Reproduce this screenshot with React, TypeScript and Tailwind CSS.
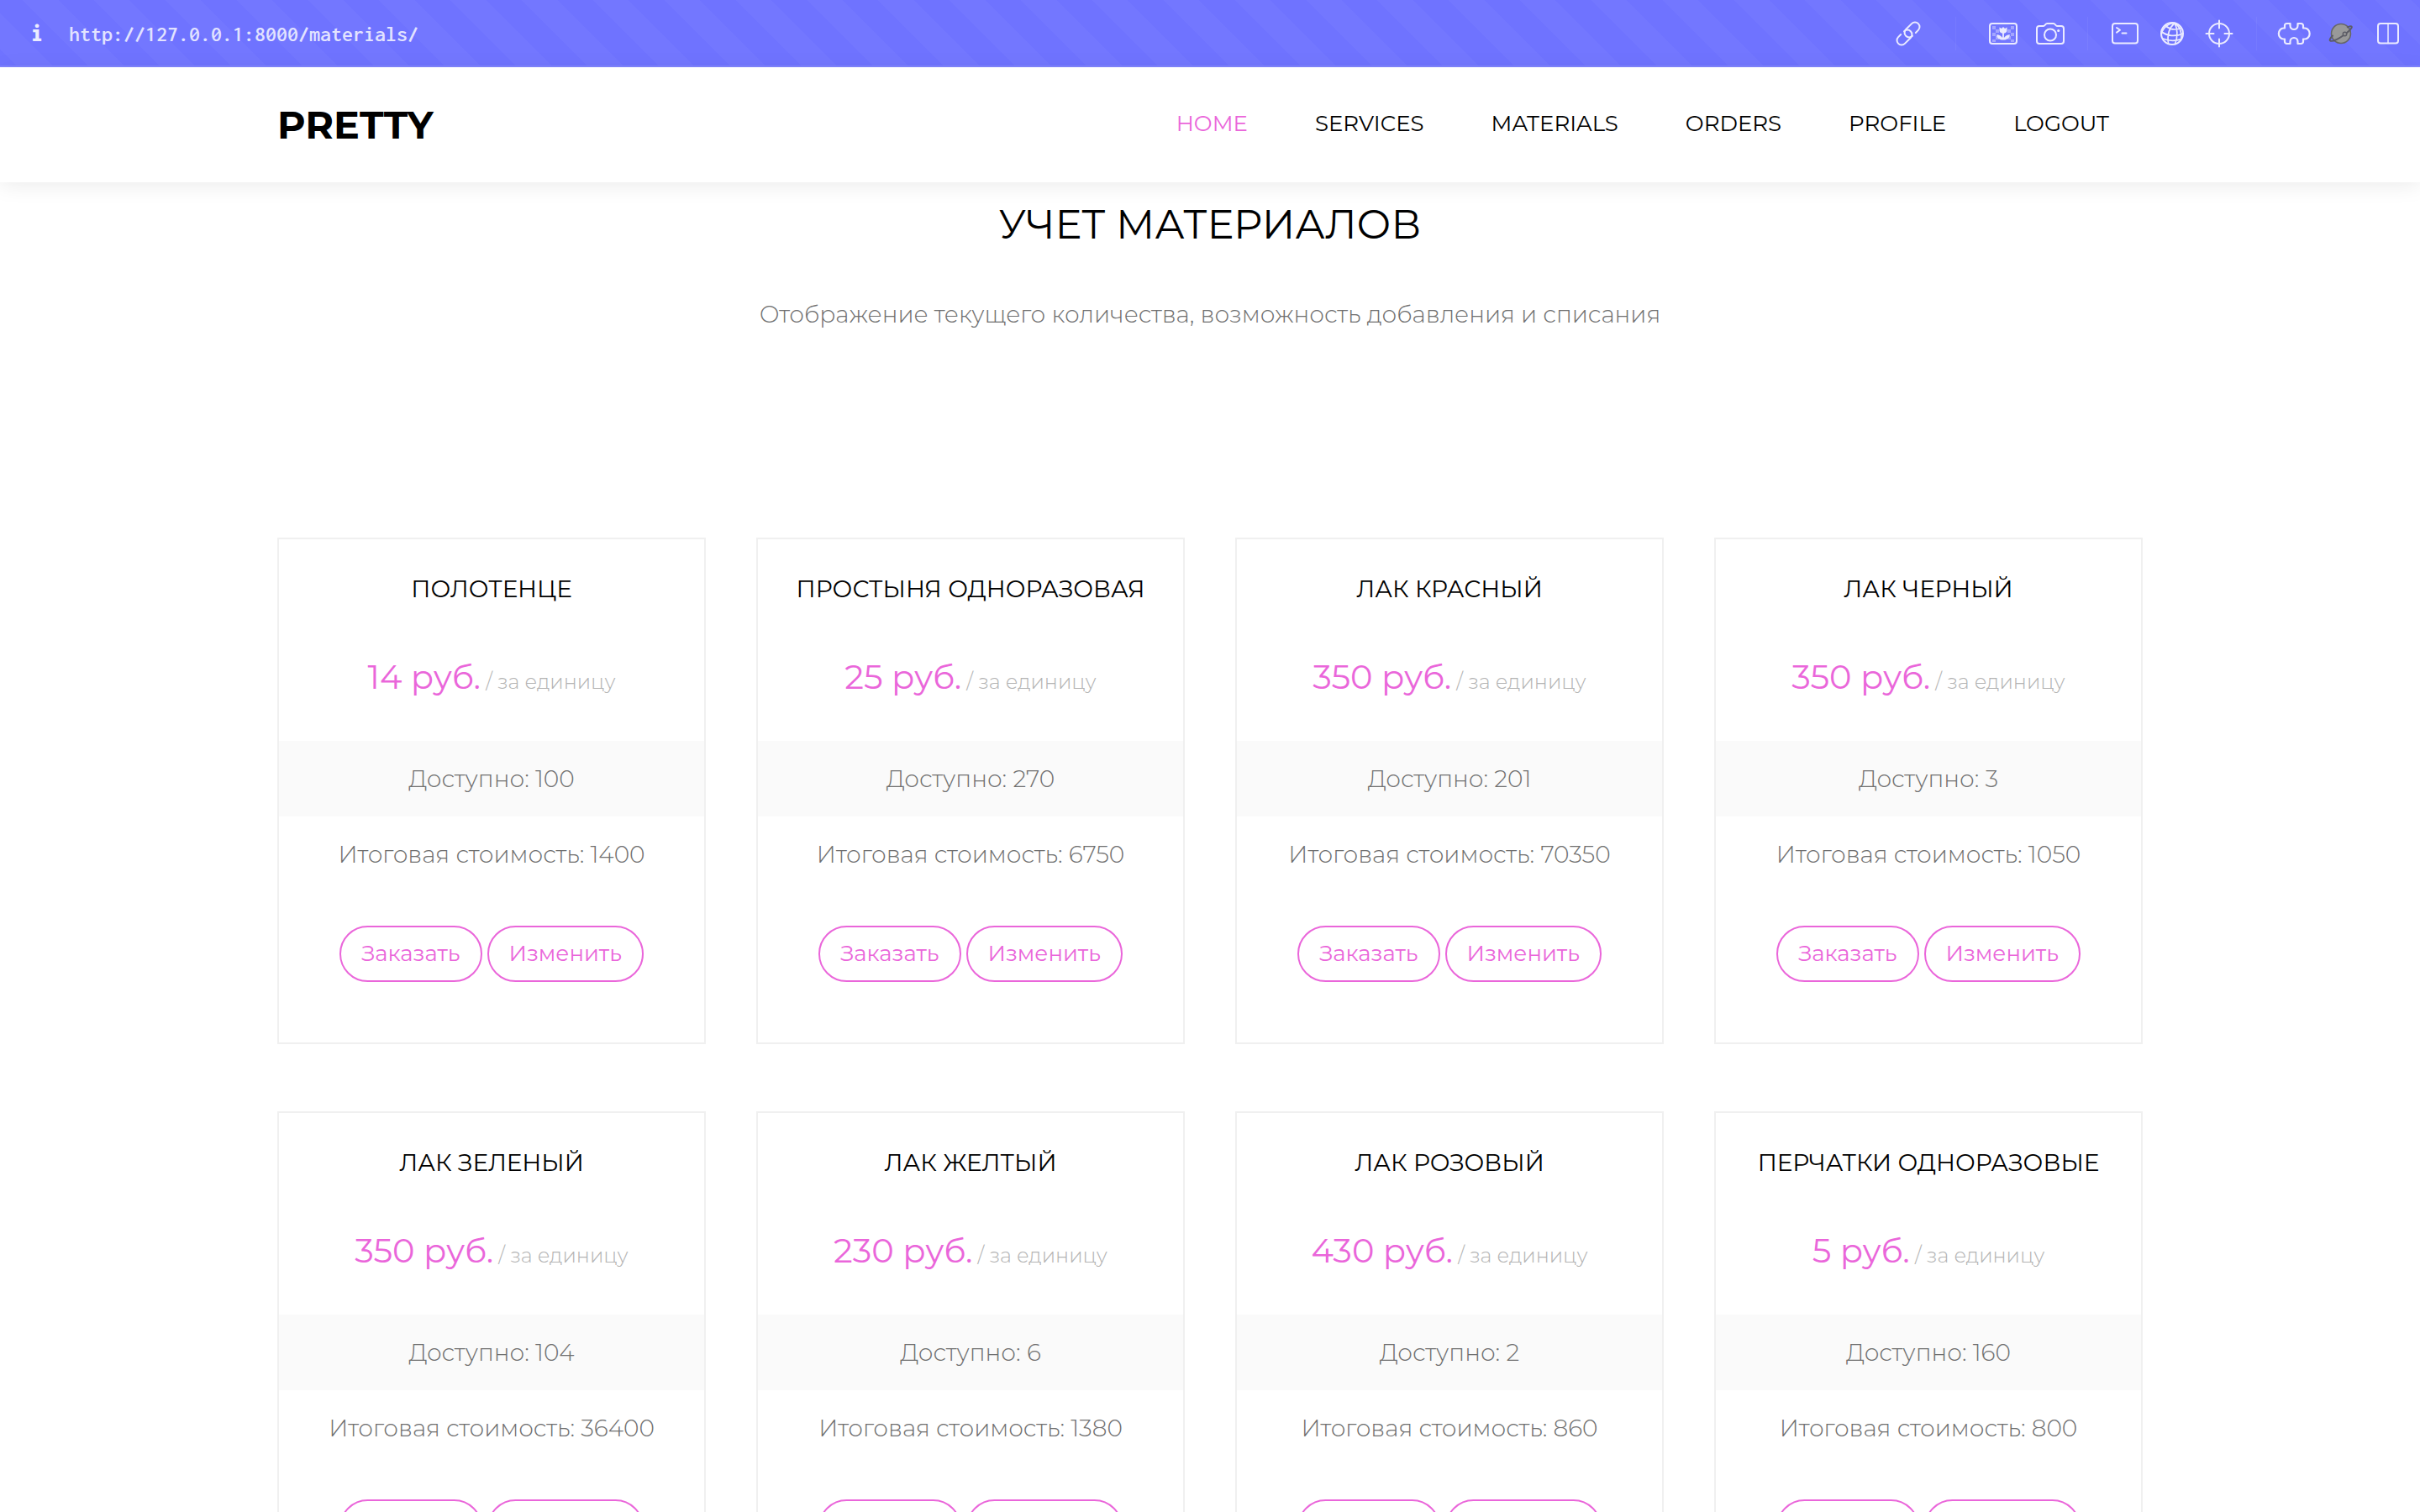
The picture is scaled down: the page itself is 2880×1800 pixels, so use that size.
import type { ReactNode } from "react";

type Material = { name: string; price: number; available: number; total: number };

const materials: Material[] = [
  { name: "Полотенце", price: 14, available: 100, total: 1400 },
  { name: "Простыня одноразовая", price: 25, available: 270, total: 6750 },
  { name: "Лак красный", price: 350, available: 201, total: 70350 },
  { name: "Лак черный", price: 350, available: 3, total: 1050 },
  { name: "Лак зеленый", price: 350, available: 104, total: 36400 },
  { name: "Лак желтый", price: 230, available: 6, total: 1380 },
  { name: "Лак розовый", price: 430, available: 2, total: 860 },
  { name: "Перчатки одноразовые", price: 5, available: 160, total: 800 },
];

const navItems = ["Home", "Services", "Materials", "Orders", "Profile", "Logout"];

function ToolButton({ label, children }: { label: string; children: ReactNode }) {
  return (
    <button type="button" aria-label={label} className="flex h-14 w-14 items-center justify-center">
      <svg
        viewBox="0 0 40 40"
        className="h-10 w-10"
        fill="none"
        stroke="currentColor"
        strokeWidth="2"
        strokeLinecap="round"
        strokeLinejoin="round"
        aria-hidden="true"
      >
        {children}
      </svg>
    </button>
  );
}

function Divider() {
  return <span className="mx-4 h-10 w-px bg-white/5" />;
}

function BrowserBar() {
  return (
    <div className="flex h-20 shrink-0 items-center border-b-2 border-[#8084ff] bg-[repeating-linear-gradient(45deg,#6f73ff_0px,#6f73ff_14px,#7377ff_14px,#7377ff_44px,#6f73ff_44px,#6f73ff_60px)] pt-0.5 pr-2.5 text-[#ebebff]">
      <span className="w-[82px] pl-[37px] font-['Inconsolata','DejaVu_Sans_Mono',monospace] text-[28px] font-black">i</span>
      <input
        aria-label="Address"
        readOnly
        value="http://127.0.0.1:8000/materials/"
        className="min-w-0 flex-1 bg-transparent font-['Inconsolata','DejaVu_Sans_Mono',monospace] text-[26px] font-semibold text-[#e2e3ff] outline-none"
      />
      <div className="flex items-center">
        <ToolButton label="Copy link">
          <g transform="rotate(-45 20 20)">
            <path d="M13 14.500H8.700a5.500 5.500 0 0 0 0 11h9.800a5.500 5.500 0 0 0 0-11" />
            <path d="M27 25.500h4.300a5.500 5.500 0 0 0 0-11h-9.800a5.500 5.500 0 0 0 0 11" />
          </g>
        </ToolButton>
        <span className="mx-7 h-10 w-px bg-white/5" />
        <ToolButton label="Page image">
          <rect x="4" y="8" width="32" height="24" rx="3" />
          <g fill="currentColor" stroke="none" opacity="0.4">
            <path d="M7 11h4v4H7zM11 15h4v4h-4zM7 19h4v4H7zM11 23h4v4h-4zM7 27h4v3H7zM29 11h4v4h-4zM25 15h4v4h-4zM29 19h4v4h-4zM25 23h4v4h-4zM29 27h4v3h-4z" />
          </g>
          <path
            fill="currentColor"
            stroke="none"
            d="M15.500 12.500l2.500 1.500 2-2 2 2 2.500-1.500v3.500c0 2-1.500 3.500-3.600 3.800V25c1.600-2.400 4-3.800 7-3.800-.3 4-3.300 6.300-7.900 6.300s-7.600-2.300-7.900-6.300c3 0 5.400 1.400 7 3.800v-5.200c-2.100-.3-3.600-1.800-3.600-3.800z"
          />
        </ToolButton>
        <ToolButton label="Screenshot">
          <path d="M7 11h5c1.500 0 2.300-3 4.200-3h7.600c1.900 0 2.700 3 4.200 3h5a3 3 0 0 1 3 3v15a3 3 0 0 1-3 3H7a3 3 0 0 1-3-3V14a3 3 0 0 1 3-3z" />
          <circle cx="20" cy="21.500" r="7" />
          <circle cx="29.700" cy="16.500" r="1.600" fill="currentColor" stroke="none" />
        </ToolButton>
        <Divider />
        <ToolButton label="Console">
          <rect x="5" y="8" width="30" height="23.500" rx="3" />
          <path d="M10 13l4 2.800-4 2.800M16.500 19.500h5" />
        </ToolButton>
        <ToolButton label="Network">
          <circle cx="20" cy="20" r="13" />
          <path
            strokeWidth="1.700"
            d="M23 7.500c-6 5-9 14-7.500 24.500M23 7.500c3.500 6 4 16 .5 25M23 7.500C15 8 9 13 7.500 20M23 7.500c5 3 8.500 9 8 18M12 10.500c5 4.500 12 5.500 18.500 3M7.500 17.500c6 5.500 16.500 6.500 25.500 2.500M9 26c6.500 2.500 15 3 22 .5"
          />
        </ToolButton>
        <ToolButton label="Inspect">
          <circle cx="20" cy="20" r="12" />
          <path d="M20 4.500V13.500M20 26.500v9M4.500 20H13.500M26.500 20h9" />
        </ToolButton>
        <Divider />
        <ToolButton label="Extensions">
          <path
            strokeWidth="2.200"
            d="M11.500 8h4v2.500a4.500 4.500 0 0 0 9 0V8h4a2.500 2.500 0 0 1 2.500 2.500V13.500h2a5.500 6.300 0 0 1 0 13h-2v3A2.500 2.500 0 0 1 28.500 32h-4v-2.500a4.500 4.500 0 0 0-9 0V32h-4A2.500 2.500 0 0 1 9 29.500v-3H7.500a5.500 6.300 0 0 1 0-13H9v-3A2.500 2.500 0 0 1 11.500 8z"
          />
        </ToolButton>
        <ToolButton label="Planet extension">
          <circle cx="20" cy="20" r="11.500" fill="#999999" stroke="#666666" strokeWidth="1.500" />
          <path
            stroke="#5c5c66"
            strokeWidth="2"
            d="M10 22.500c-3 3-4 5.300-2.800 6 2.500 1.300 9-1.800 15.500-6.300s11.300-9.300 9.800-10.700c-.6-.7-2.500-.2-4.700.8"
          />
          <circle cx="24.500" cy="20.500" r="2.200" fill="#999999" stroke="#5c5c66" strokeWidth="1.500" />
        </ToolButton>
        <ToolButton label="Split view">
          <rect x="8" y="8" width="24" height="23.500" rx="3" />
          <path strokeWidth="1.500" d="M20 8v23.500" />
        </ToolButton>
      </div>
    </div>
  );
}

function SiteHeader() {
  return (
    <header className="relative shrink-0 bg-white shadow-[0_4px_24px_rgba(0,0,0,0.08)]">
      <div className="mx-auto flex h-[137px] w-full max-w-[2220px] items-center justify-between pr-10">
        <a href="#" className="text-[46px] font-bold uppercase text-black">
          Pretty
        </a>
        <nav className="flex gap-20 pb-0.5">
          {navItems.map((item, i) => (
            <a
              key={item}
              href="#"
              className={i === 0 ? "text-[26px] uppercase text-[#ea66da]" : "text-[26px] uppercase text-black"}
            >
              {item}
            </a>
          ))}
        </nav>
      </div>
    </header>
  );
}

function PillButton({ children }: { children: ReactNode }) {
  return (
    <button
      type="button"
      className="h-[67px] rounded-full border-2 border-[#ea66da] px-6 text-[26px] text-[#ea66da]"
    >
      {children}
    </button>
  );
}

function MaterialCard({ material }: { material: Material }) {
  return (
    <article className="border-2 border-[#f0f0f0] pt-[38px] pb-[72px] text-center">
      <h2 className="text-[28px] leading-[42px] uppercase text-black">{material.name}</h2>
      <p className="mt-[54px] mb-[46px] text-[40px] leading-[60px] text-[#ea66da]">
        {material.price} руб.
        <span className="text-[24px] leading-none font-light text-[#b3b3b3]"> / за единицу</span>
      </p>
      <ul className="text-[28px] leading-[90px] font-light text-[#707070]">
        <li className="bg-[#fafafa]">Доступно: {material.available}</li>
        <li>Итоговая стоимость: {material.total}</li>
      </ul>
      <div className="mt-10 flex justify-center gap-1.5">
        <PillButton>Заказать</PillButton>
        <PillButton>Изменить</PillButton>
      </div>
    </article>
  );
}

export default function App() {
  return (
    <div className="flex h-screen flex-col overflow-hidden bg-white font-['Montserrat','Inter',sans-serif]">
      <BrowserBar />
      <SiteHeader />
      <main className="mx-auto w-full max-w-[2220px]">
        <div className="pt-5 text-center">
          <h1 className="text-[48px] leading-[60px] uppercase text-black">Учет материалов</h1>
          <p className="mt-[55px] text-[28px] leading-[44px] font-light text-[#707070]">
            Отображение текущего количества, возможность добавления и списания
          </p>
        </div>
        <section className="mt-[244px] grid grid-cols-4 gap-x-[60px] gap-y-20">
          {materials.map((material) => (
            <MaterialCard key={material.name} material={material} />
          ))}
        </section>
      </main>
    </div>
  );
}
